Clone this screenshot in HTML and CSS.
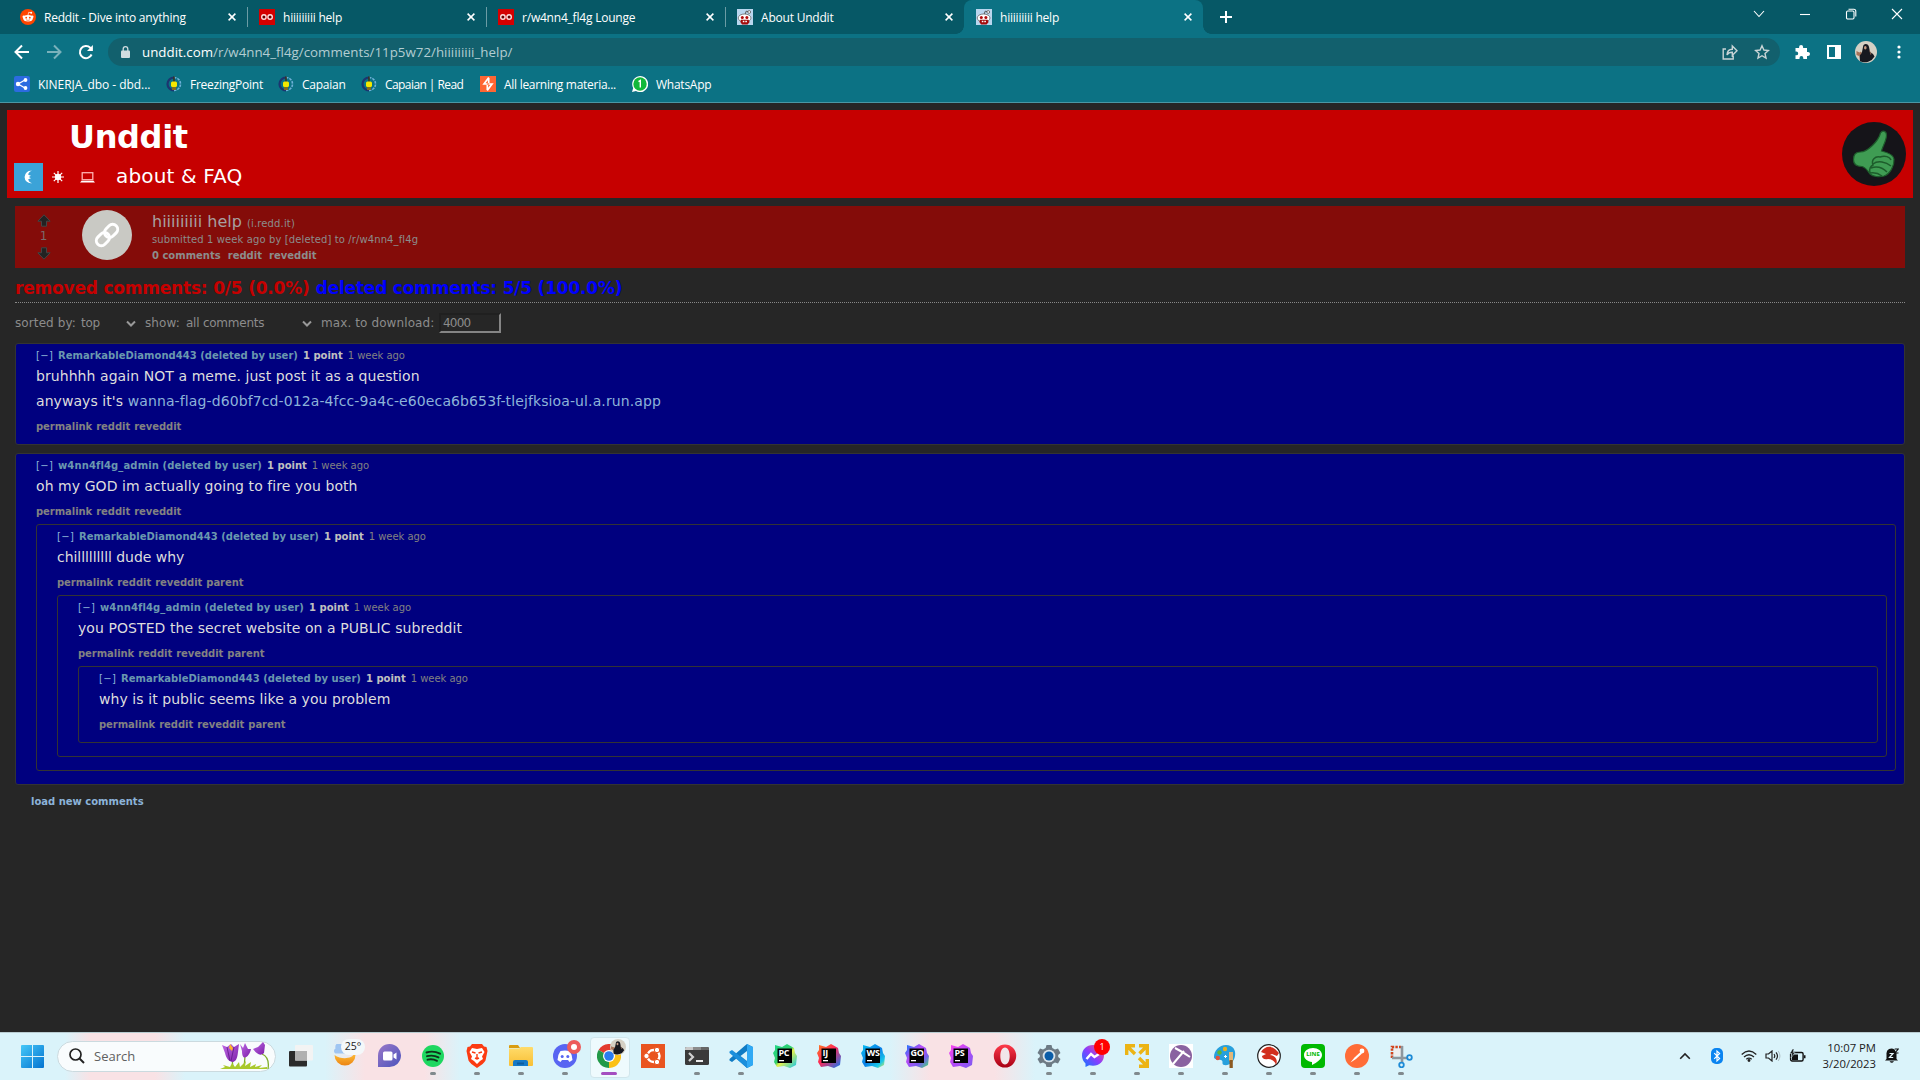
FILE: index.html
```html
<!DOCTYPE html>
<html lang="en">
<head>
<meta charset="utf-8">
<title>hiiiiiiiii help</title>
<link rel="stylesheet" href="styles.css">
</head>
<body>
<svg class="sprite" aria-hidden="true">
  <defs>
    <linearGradient id="jbGreen" x1="0" y1="0" x2="1" y2="1"><stop offset="0" stop-color="#21d789"/><stop offset=".45" stop-color="#2fd06f"/><stop offset=".55" stop-color="#e8f04c"/><stop offset="1" stop-color="#07c3f2"/></linearGradient>
    <linearGradient id="jbRed" x1="0" y1="0" x2="1" y2="1"><stop offset="0" stop-color="#fc801d"/><stop offset=".45" stop-color="#fe2857"/><stop offset="1" stop-color="#087cfa"/></linearGradient>
    <linearGradient id="jbCyan" x1="0" y1="0" x2="1" y2="1"><stop offset="0" stop-color="#07c3f2"/><stop offset=".5" stop-color="#0b7fe8"/><stop offset=".8" stop-color="#19c8e8"/><stop offset="1" stop-color="#f0ee4a"/></linearGradient>
    <linearGradient id="jbBlue" x1="0" y1="0" x2="1" y2="1"><stop offset="0" stop-color="#087cfa"/><stop offset=".4" stop-color="#b74af7"/><stop offset=".7" stop-color="#7a5cf0"/><stop offset="1" stop-color="#3bea62"/></linearGradient>
    <linearGradient id="jbPink" x1="0" y1="0" x2="1" y2="1"><stop offset="0" stop-color="#ff45ed"/><stop offset=".5" stop-color="#b74af7"/><stop offset="1" stop-color="#7a5cf0"/></linearGradient>
    <linearGradient id="msg" x1="0" y1="1" x2="1" y2="0"><stop offset="0" stop-color="#0a7cff"/><stop offset=".5" stop-color="#8a3cff"/><stop offset="1" stop-color="#ff6070"/></linearGradient>
    <linearGradient id="win" x1="0" y1="0" x2="1" y2="1"><stop offset="0" stop-color="#45c8f8"/><stop offset="1" stop-color="#0473d0"/></linearGradient>
    <linearGradient id="folder" x1="0" y1="0" x2="0" y2="1"><stop offset="0" stop-color="#ffdc6b"/><stop offset="1" stop-color="#f8bf35"/></linearGradient>
    <linearGradient id="opera" x1="0" y1="0" x2="0" y2="1"><stop offset="0" stop-color="#ff3a4a"/><stop offset="1" stop-color="#a70014"/></linearGradient>
    <linearGradient id="teams" x1="0" y1="0" x2="1" y2="1"><stop offset="0" stop-color="#9a78c8"/><stop offset="1" stop-color="#4b53bc"/></linearGradient>
    <linearGradient id="petal" x1="0" y1="0" x2="1" y2="1"><stop offset="0" stop-color="#c06be6"/><stop offset="1" stop-color="#7c1fa8"/></linearGradient>
    <linearGradient id="moon" x1="0" y1="0" x2="0" y2="1"><stop offset="0" stop-color="#ffc13a"/><stop offset="1" stop-color="#ec8413"/></linearGradient>
  </defs>
  <symbol id="i-close" viewBox="0 0 8 8"><path d="M.6.6l6.800 6.800M7.400.6L.6 7.400" stroke="#fff" stroke-width="1.500" fill="none"/></symbol>
  <symbol id="i-reddit-old" viewBox="0 0 16 16"><path d="M0 0h16v16H0z" fill="#d40000"/><circle cx="4.900" cy="8" r="2.200" fill="#600" stroke="#ffdcdc" stroke-width="1.400"/><circle cx="11.100" cy="8" r="2.200" fill="#600" stroke="#ffdcdc" stroke-width="1.400"/></symbol>
  <symbol id="i-unddit" viewBox="0 0 16 16"><path d="M0 0h16v16H0z" fill="#b9d6ee"/><path d="M8 5.500l1.200-3.300 3 .6" stroke="#555" fill="none"/><circle cx="12.200" cy="3" r="1.400" fill="#fff" stroke="#555" stroke-width=".8"/><ellipse cx="7.600" cy="9" rx="6.400" ry="4" fill="#fff" stroke="#666" stroke-width=".8"/><circle cx="5.300" cy="8.600" r="1.500" fill="#b00a0a"/><circle cx="9.900" cy="8.600" r="1.500" fill="#b00a0a"/><path d="M4 10.800h7.600l1 2.200-2 2.600H5L3.400 13z" fill="#a30a0a"/><path d="M5.800 11.800h1.600v1.400H5.800zM8.300 11.800h1.600v1.400H8.300z" fill="#fff"/></symbol>
  <symbol id="i-gear-bulb" viewBox="0 0 16 16"><path d="M8 1.500a6.500 6.500 0 0 0 0 13" fill="none" stroke="#1c3570" stroke-width="2.200"/><path d="M8 1.500a6.500 6.500 0 0 1 0 13" fill="none" stroke="#6fb1d8" stroke-width="1.600" stroke-dasharray="2.500 1"/><path d="M8 .5V6" stroke="#3a3420" stroke-width="1.600"/><rect x="5" y="5.500" width="6" height="5.500" rx="1.500" fill="#f4e800"/><path d="M6 11h4v3H6z" fill="#806c20"/></symbol>
  <symbol id="i-jb" viewBox="0 0 24 24"><path d="M2 1l7 2 5-3 7 4 1 5 2 3-1 9-6 3-6-2-7 1-3-5 1-4-2-5 2-3z"/></symbol>
  <symbol id="i-avatar" viewBox="0 0 22 22"><circle cx="11" cy="11" r="11" fill="#d5d0c4"/><path d="M8 6c0-4 5.500-4 6 0l1 5 3 2 1.500 2.500A11 11 0 0 1 5 20.200L4.500 14 7 11z" fill="#17181f"/><ellipse cx="10.300" cy="6.800" rx="1.300" ry="1.800" fill="#c49a82"/><path d="M1.500 10l3 1.500 1.500-1 .5 2L4 15l-2.500-1z" fill="#a87258"/><path d="M14 8l2.500 5-1 1z" fill="#8c6450"/></symbol>
</svg>

<div class="browser">
  <div class="tabstrip">
    <div class="tab"><svg class="fav" viewBox="0 0 16 16"><circle cx="8" cy="8" r="8" fill="#ff4500"/><ellipse cx="8" cy="9.300" rx="4.800" ry="3.300" fill="#fff"/><circle cx="3.700" cy="7.700" r="1.200" fill="#fff"/><circle cx="12.300" cy="7.700" r="1.200" fill="#fff"/><circle cx="11.200" cy="3.700" r="1" fill="#fff"/><path d="M8 6l.7-2.700 2.500.4" stroke="#fff" stroke-width=".7" fill="none"/><circle cx="6.200" cy="8.700" r=".9" fill="#ff4500"/><circle cx="9.800" cy="8.700" r=".9" fill="#ff4500"/><path d="M6 10.800q2 1.200 4 0" stroke="#ff4500" stroke-width=".6" fill="none"/></svg><span class="tab-title">Reddit - Dive into anything</span><svg class="close"><use href="#i-close"/></svg></div>
    <div class="tab"><svg class="fav"><use href="#i-reddit-old"/></svg><span class="tab-title">hiiiiiiiii help</span><svg class="close"><use href="#i-close"/></svg></div>
    <div class="tab"><svg class="fav"><use href="#i-reddit-old"/></svg><span class="tab-title">r/w4nn4_fl4g Lounge</span><svg class="close"><use href="#i-close"/></svg></div>
    <div class="tab last"><svg class="fav"><use href="#i-unddit"/></svg><span class="tab-title">About Unddit</span><svg class="close"><use href="#i-close"/></svg></div>
    <div class="tab active"><svg class="fav"><use href="#i-unddit"/></svg><span class="tab-title">hiiiiiiiii help</span><svg class="close"><use href="#i-close"/></svg></div>
    <svg class="plus" viewBox="0 0 12 12"><path d="M6 0v12M0 6h12" stroke="#fff" stroke-width="2"/></svg>
    <div class="window-controls">
      <svg viewBox="0 0 12 12"><path d="M1 3l5 5.500L11 3" /></svg>
      <svg viewBox="0 0 12 12"><path d="M1 6.500h10"/></svg>
      <svg viewBox="0 0 12 12"><rect x="1.500" y="3" width="7.500" height="8" rx="1.200"/><path d="M3.500 1.200h5.300a2 2 0 0 1 2 2v5.300"/></svg>
      <svg viewBox="0 0 12 12"><path d="M1 1l10 10M11 1L1 11"/></svg>
    </div>
  </div>

  <div class="toolbar">
    <svg class="nav" viewBox="0 0 16 16"><path d="M15 8H2M8 1.500L1.500 8 8 14.500"/></svg>
    <svg class="nav dim" viewBox="0 0 16 16"><path d="M1 8h13M8 1.500L14.500 8 8 14.500"/></svg>
    <svg class="nav" viewBox="0 0 16 16"><path d="M13.600 10.500A6.100 6.100 0 1 1 12.300 3.700L14 5.400"/><path d="M14.900 1v6H9z" fill="#fff" stroke="none"/></svg>
    <div class="omnibox">
      <svg class="lock" viewBox="0 0 9 12"><rect y="4.500" width="9" height="7.500" rx="1" fill="#d0dcdf"/><path d="M2.200 5V3a2.300 2.300 0 0 1 4.600 0v2" fill="none" stroke="#d0dcdf" stroke-width="1.300"/></svg>
      <span class="url"><b>unddit.com</b>/r/w4nn4_fl4g/comments/11p5w72/hiiiiiiiii_help/</span>
      <svg class="share" viewBox="0 0 16 16"><path d="M4 5H1.200v10h10v-3.500M5 11c.2-4 2.500-5.800 5.300-5.800V2L15 6.700l-4.700 4.600V8.200C8 8.200 6 9 5 11z"/></svg>
      <svg class="star" viewBox="0 0 16 16"><path d="M8 1.800l1.900 4.200 4.500.5-3.400 3 1 4.500L8 11.700 4 14l1-4.500-3.400-3 4.500-.5z"/></svg>
    </div>
    <div class="actions">
      <svg width="16" height="16" viewBox="0 0 16 16"><path d="M1.500 4h3.600V3a2 2 0 1 1 4 0v1H13v3.900h1a2 2 0 1 1 0 4h-1V15H9.300v-1a1.900 1.900 0 0 0-3.800 0v1h-4v-3.700h.8a1.900 1.900 0 0 0 0-3.800h-.8z" fill="#fff"/></svg>
      <svg width="14" height="14" viewBox="0 0 14 14"><path d="M0 0h14v14H0zM2 2v10h6V2z" fill="#fff" fill-rule="evenodd"/></svg>
      <svg width="22" height="22"><use href="#i-avatar"/></svg>
      <svg width="4" height="14" viewBox="0 0 4 14"><circle cx="2" cy="2" r="1.600" fill="#fff"/><circle cx="2" cy="7" r="1.600" fill="#fff"/><circle cx="2" cy="12" r="1.600" fill="#fff"/></svg>
    </div>
  </div>

  <div class="bookmarks">
    <div class="bm bm1"><svg class="fav" viewBox="0 0 16 16"><rect width="16" height="16" rx="2" fill="#2c6be0"/><path d="M4 8l7-4M4 8l7 4" stroke="#fff" stroke-width="1.400"/><circle cx="4" cy="8" r="2.200" fill="#fff"/><circle cx="11.500" cy="4" r="1.900" fill="#fff"/><circle cx="11.500" cy="12" r="1.900" fill="#fff"/></svg><span>KINERJA_dbo - dbd...</span></div>
    <div class="bm bm2"><svg class="fav"><use href="#i-gear-bulb"/></svg><span>FreezingPoint</span></div>
    <div class="bm bm3"><svg class="fav"><use href="#i-gear-bulb"/></svg><span>Capaian</span></div>
    <div class="bm bm4"><svg class="fav"><use href="#i-gear-bulb"/></svg><span>Capaian | Read</span></div>
    <div class="bm bm5"><svg class="fav" viewBox="0 0 16 16"><path d="M0 0h16v16H0z" fill="#ff6633"/><path d="M8.800 1.500L4 8h3.500M8.500 8H12L7.200 14.500M8.700 2v5M7.300 9v5" stroke="#fff" stroke-width="1.700" fill="none"/></svg><span>All learning materia...</span></div>
    <div class="bm bm6"><svg class="fav" viewBox="0 0 16 16"><path d="M0 16l1.200-4A8 8 0 1 1 4 14.900z" fill="#fff"/><circle cx="8" cy="8" r="6.700" fill="#12b83a"/><path d="M6.500 5.700L8.300 4.500V11.500" stroke="#fff" stroke-width="1.400" fill="none"/></svg><span>WhatsApp</span></div>
  </div>
</div>

<main class="page">
  <header class="banner">
    <div>
      <h1>Unddit</h1>
      <nav>
        <span class="theme on"><svg width="11" height="14" viewBox="0 0 11 14"><path d="M10 .8A6.300 6.300 0 1 0 10 13.200C7.800 12.600 6.500 11.200 6.200 9.300L9 8.300 6.800 7 9 5.800 6.200 4.700C6.500 2.800 7.800 1.400 10 .8z" fill="#fff"/></svg></span>
        <svg class="sun" viewBox="0 0 12 12"><circle cx="6" cy="6" r="3.200" fill="#fff"/><path d="M6 0v12M0 6h12M1.800 1.800l8.400 8.400M10.200 1.800l-8.400 8.400" stroke="#fff" stroke-width="1.200"/></svg>
        <svg class="laptop" viewBox="0 0 15 11"><rect x="2.200" y=".7" width="10.600" height="7" fill="#c60000" stroke="#ffb0b0" stroke-width="1.300"/><path d="M1.500 8.800h12l1.500 1.700H0z" fill="#fff"/></svg>
        <a class="faq">about &amp; FAQ</a>
      </nav>
    </div>
    <svg class="thumb" viewBox="0 0 64 64"><circle cx="32" cy="32" r="32" fill="#151419"/><path d="M38.500 11c2-3 6-2 6 2 0 6-4 11-5 16 4 1 12 3 12.500 8 .5 7-4 15-10 17-5 1.500-11 .5-14-2-2-3-5-7-8-7.500-6 0-8.500-2-8.500-7 0-5 2-7.500 7-7.500 7 0 18-11 20-19z" fill="#3f9c53" stroke="#1d5c2b" stroke-width="1.200"/><path d="M28 51c-1.500-4 1-7 3-8-2-5 2-9 7-8 5-2 10 0 11 3M31 42c5-4 13-2 18 2M29 46c6-2 12 0 16 4M28 51c5-1 8 0 12 3" fill="none" stroke="#1d5c2b" stroke-width="1.500"/></svg>
  </header>

  <section class="post">
    <div class="votes">
      <svg viewBox="0 0 14 13"><path d="M7 .8l6.200 6.400H9.500v5h-5v-5H.8z"/></svg>
      <span>1</span>
      <svg viewBox="0 0 14 13"><path d="M7 12.200L.8 5.800h3.700v-5h5v5h3.700z"/></svg>
    </div>
    <svg class="thumbnail" viewBox="0 0 50 50"><circle cx="25" cy="25" r="25" fill="#c9c9c4"/><g fill="none" stroke="#fff" stroke-width="3" transform="rotate(-45 25 25)"><rect x="12" y="20" width="14.500" height="10" rx="5"/><rect x="23.500" y="20" width="14.500" height="10" rx="5"/></g></svg>
    <div class="post-text">
      <div class="title">hiiiiiiiii help <small>(i.redd.it)</small></div>
      <div class="meta">submitted 1 week ago by [deleted] to /r/w4nn4_fl4g</div>
      <div class="post-links"><a>0 comments</a><a>reddit</a><a>reveddit</a></div>
    </div>
  </section>

  <div class="stats"><span class="removed">removed comments: 0/5 (0.0%)</span><span class="deleted">deleted comments: 5/5 (100.0%)</span></div>

  <div class="controls">
    <span class="c-sort">sorted by:</span>
    <span class="sel sel-sort">top<svg viewBox="0 0 10 7"><path d="M1 1.500l4 4 4-4"/></svg></span>
    <span class="c-show">show:</span>
    <span class="sel sel-show">all comments<svg viewBox="0 0 10 7"><path d="M1 1.500l4 4 4-4"/></svg></span>
    <span class="c-max">max. to download:</span>
    <span class="number">4000</span>
  </div>

  <article class="comment">
    <div class="head"><span class="fold">[−]</span><b class="user short">RemarkableDiamond443 (deleted by user)</b><b class="points">1 point</b><span class="ago">1 week ago</span></div>
    <p>bruhhhh again NOT a meme. just post it as a question</p>
    <p>anyways it's <a>wanna-flag-d60bf7cd-012a-4fcc-9a4c-e60eca6b653f-tlejfksioa-ul.a.run.app</a></p>
    <div class="links"><a>permalink</a><a>reddit</a><a>reveddit</a></div>
  </article>

  <article class="comment">
    <div class="head"><span class="fold">[−]</span><b class="user">w4nn4fl4g_admin (deleted by user)</b><b class="points">1 point</b><span class="ago">1 week ago</span></div>
    <p>oh my GOD im actually going to fire you both</p>
    <div class="links"><a>permalink</a><a>reddit</a><a>reveddit</a></div>
    <article class="comment">
      <div class="head"><span class="fold">[−]</span><b class="user short">RemarkableDiamond443 (deleted by user)</b><b class="points">1 point</b><span class="ago">1 week ago</span></div>
      <p class="snug">chilllllllll dude why</p>
      <div class="links"><a>permalink</a><a>reddit</a><a>reveddit</a><a>parent</a></div>
      <article class="comment">
        <div class="head"><span class="fold">[−]</span><b class="user">w4nn4fl4g_admin (deleted by user)</b><b class="points">1 point</b><span class="ago">1 week ago</span></div>
        <p>you POSTED the secret website on a PUBLIC subreddit</p>
        <div class="links"><a>permalink</a><a>reddit</a><a>reveddit</a><a>parent</a></div>
        <article class="comment">
          <div class="head"><span class="fold">[−]</span><b class="user short">RemarkableDiamond443 (deleted by user)</b><b class="points">1 point</b><span class="ago">1 week ago</span></div>
          <p>why is it public seems like a you problem</p>
          <div class="links"><a>permalink</a><a>reddit</a><a>reveddit</a><a>parent</a></div>
        </article>
      </article>
    </article>
  </article>

  <div class="load-new">load new comments</div>
</main>

<footer class="taskbar">
  <div class="cell"><svg width="23" height="23" viewBox="0 0 23 23"><path d="M0 1q0-1 1-1h10v11H0zM12 0h10q1 0 1 1v10H12zM0 12h11v11H1q-1 0-1-1zM12 12h11v10q0 1-1 1H12z" fill="url(#win)"/></svg></div>
  <div class="search">
    <svg width="16" height="16" viewBox="0 0 16 16"><circle cx="6.500" cy="6.500" r="5.500" fill="none" stroke="#222" stroke-width="1.700"/><path d="M10.500 10.500l4.500 4.500" stroke="#222" stroke-width="2"/></svg>
    <span>Search</span>
    <svg class="flowers" viewBox="0 0 50 28"><path d="M12 15l1 12M25 14l-1 13M42 12c7 3 7 9 6 15" stroke="#7fae2c" stroke-width="1.300" fill="none"/><path d="M2 3l5 2 4-3 3 3 5-3-1 8c-1 9-3 9-5 10-4 0-7-4-8-9z" fill="url(#petal)"/><path d="M7 5l3 14M14 5l-3 14" stroke="#5e1687" stroke-width=".8"/><path d="M20 2l3 4 2-5 3 6 3 0c-1 7-9 14-9 2z" fill="url(#petal)"/><path d="M33 7l5-2 5-5 2 3-1 8c-4 4-8 0-11-4z" fill="url(#petal)"/><path d="M9 6l1-4 3 4-1 3z" fill="#ffb428"/><path d="M0 27l5-2-2-2 7 2 2-4 3 4 4-5 1 5 6-6-1 5 6-4-1 5 6-3-1 3 7-2-3 3 8-1v2z" fill="#a9c92c"/></svg>
  </div>
  <div class="cell"><svg width="24" height="24" viewBox="0 0 24 24"><rect x="0" y="7" width="18" height="15.500" rx="1" fill="#2b2b2b"/><rect x="6" y="1" width="18" height="15.500" rx="1" fill="#f3f3f3"/><path d="M6 7h12v9.500H6z" fill="#b0b0b0"/></svg></div>
  <div class="cell weather"><svg width="24" height="24" viewBox="0 0 24 24"><path d="M1.500 11a10.500 10.500 0 0 0 21 0l-1-2c-2 6-13 7-20 2z" fill="url(#moon)"/><path d="M2.500 9.500a2.800 2.800 0 0 1 0-5 5 5 0 0 1 9.500-3v8z" fill="#9fc5f2"/></svg><span class="temp">25°</span></div>
  <div class="cell"><svg width="24" height="24" viewBox="0 0 24 24"><path d="M1 23V11.500A11.500 11.500 0 1 1 12 23z" fill="url(#teams)"/><rect x="6" y="7.500" width="9.500" height="9" rx="1.500" fill="#fff"/><path d="M16.500 10.500l3-2v7l-3-2z" fill="#fff"/></svg></div>
  <div class="cell run"><svg width="24" height="24" viewBox="0 0 24 24"><circle cx="12" cy="12" r="11" fill="#1ed760"/><path d="M5.500 8.500q7-2.200 13.500 1.200M6 12.200q6-1.600 11.500 1.200M6.500 15.700q5-1.200 9.500 1.100" stroke="#10301a" stroke-width="1.900" stroke-linecap="round" fill="none"/></svg></div>
  <div class="cell run"><svg width="24" height="24" viewBox="0 0 24 24"><path d="M7 0h10l2 2.500 2.500.5 1 4-2 9.500Q19 19.500 12 24 5 19.500 3.500 16.500L1.500 7l1-4L5 2.500z" fill="#fb3b12"/><path d="M12 5l5-1 2.500 4-2.500 4.500 1 2.500-3 2-3 3-3-3-3-2 1-2.500L4.500 8 7 4z" fill="#fff"/><path d="M7 8l3.500 1M17 8l-3.500 1M10 14l2 1 2-1M12 10v4" stroke="#fb3b12" stroke-width="1.400" fill="none"/></svg></div>
  <div class="cell run"><svg width="24" height="24" viewBox="0 0 24 24"><path d="M0 2q0-1 1-1h8l2 3H0z" fill="#d99c10"/><path d="M0 4.500h10l2-1.500h11q1 0 1 1v17q0 1-1 1H1q-1 0-1-1z" fill="url(#folder)"/><path d="M4 22v-4q0-2 2-2h11q2 0 2 2v4z" fill="#1579c6"/><path d="M8 18.500h7v2H8z" fill="#0c5c9f"/></svg></div>
  <div class="cell run"><svg width="24" height="24" viewBox="0 0 24 24"><circle cx="12" cy="12" r="12" fill="#5865f2"/><path d="M7.500 7Q12 6 16.500 7q3 4 3 9l-3 2-1.500-2h-6l-1.500 2-3-2q0-5 3-9z" fill="#fff"/><circle cx="9.200" cy="12.500" r="1.500" fill="#5865f2"/><circle cx="14.800" cy="12.500" r="1.500" fill="#5865f2"/></svg><svg class="badge b-discord" viewBox="0 0 14 14"><circle cx="7" cy="7" r="7" fill="#ed5b5b"/><circle cx="7" cy="7" r="3" fill="#fff"/></svg></div>
  <div class="cell run current"><svg width="24" height="24" viewBox="0 0 24 24"><path d="M12 12L1.600 6A12 12 0 0 1 22.400 6z" fill="#e33b2e"/><path d="M12 12l10.400-6A12 12 0 0 1 12 24z" fill="#fbc116"/><path d="M12 12v12A12 12 0 0 1 1.600 6z" fill="#229a48"/><path d="M12 6h10.400q3 8-3 14L12 24l5.200-9z" fill="#fbc116"/><circle cx="12" cy="12" r="6" fill="#fff"/><circle cx="12" cy="12" r="4.800" fill="#2a7cf0"/></svg><svg class="badge b-chrome"><use href="#i-avatar"/></svg></div>
  <div class="cell"><svg width="24" height="24" viewBox="0 0 24 24"><path d="M0 0h24v24H0z" fill="#e95420"/><circle cx="12.500" cy="12" r="6" fill="none" stroke="#fff" stroke-width="2.400"/><g fill="#fff" stroke="#e95420" stroke-width="1"><circle cx="5.500" cy="12" r="2.700"/><circle cx="16" cy="6" r="2.700"/><circle cx="16" cy="18" r="2.700"/></g></svg></div>
  <div class="cell run"><svg width="24" height="24" viewBox="0 0 24 24"><rect y="3" width="24" height="18" rx="1.500" fill="#3a3a3a"/><path d="M0 6V4.500Q0 3 1.500 3H8v3z" fill="#c8c8c8"/><path d="M8 3h8v3H8z" fill="#8b8b8b"/><path d="M16 3h6.500Q24 3 24 4.500V6h-8z" fill="#666"/><path d="M4 9l4 4-4 4" stroke="#d0d0d0" stroke-width="2.200" fill="none"/><path d="M11 17h7" stroke="#fff" stroke-width="1.800"/></svg></div>
  <div class="cell run"><svg width="24" height="24" viewBox="0 0 24 24"><path d="M18 0l6 3v18l-6 3L7.500 14.500 3 18l-2.500-1.500V15l15-13z" fill="#0f7bc4"/><path d="M.5 7.500L3 6l15 11.500V24L.5 9z" fill="#1b8fdc"/><path d="M18 0l6 3v18l-6 3z" fill="#30a9f4"/><path d="M18 7v10l-6.500-5z" fill="#daf3fa"/></svg></div>
  <div class="cell jb"><svg width="24" height="24" viewBox="0 0 24 24"><use href="#i-jb" fill="url(#jbGreen)"/><path d="M4.500 4.500h14.500v14.500H4.500z"/><path d="M6 16h5v1.300H6z" fill="#fff"/></svg><b>PC</b></div>
  <div class="cell jb"><svg width="24" height="24" viewBox="0 0 24 24"><use href="#i-jb" fill="url(#jbRed)"/><path d="M4.500 4.500h14.500v14.500H4.500z"/><path d="M6 16h5v1.300H6z" fill="#fff"/></svg><b>IJ</b></div>
  <div class="cell jb"><svg width="24" height="24" viewBox="0 0 24 24"><use href="#i-jb" fill="url(#jbCyan)"/><path d="M4.500 4.500h14.500v14.500H4.500z"/><path d="M6 16h5v1.300H6z" fill="#fff"/></svg><b>WS</b></div>
  <div class="cell jb"><svg width="24" height="24" viewBox="0 0 24 24"><use href="#i-jb" fill="url(#jbBlue)"/><path d="M4.500 4.500h14.500v14.500H4.500z"/><path d="M6 16h5v1.300H6z" fill="#fff"/></svg><b>GO</b></div>
  <div class="cell jb"><svg width="24" height="24" viewBox="0 0 24 24"><use href="#i-jb" fill="url(#jbPink)"/><path d="M4.500 4.500h14.500v14.500H4.500z"/><path d="M6 16h5v1.300H6z" fill="#fff"/></svg><b>PS</b></div>
  <div class="cell"><svg width="24" height="24" viewBox="0 0 24 24"><path d="M12 .5a11.200 11.500 0 1 0 0 23 11.200 11.500 0 0 0 0-23zM12 3.500c3 0 4.700 4 4.700 8.500s-1.700 8.500-4.700 8.500S7.300 16.500 7.300 12 9 3.500 12 3.500z" fill="url(#opera)" fill-rule="evenodd"/></svg></div>
  <div class="cell run"><svg width="24" height="24" viewBox="0 0 24 24"><path d="M9.500 1h5l.8 3 2.700 1.500 3-1L23.500 9l-2.300 2v2l2.300 2-2.500 4.500-3-1-2.700 1.500-.8 3h-5l-.8-3L6 18.500l-3 1L.5 15l2.300-2v-2L.5 9 3 4.500l3 1L8.700 4z" fill="#6d7a84"/><circle cx="12" cy="12" r="6.300" fill="#d8e4ec"/><circle cx="12" cy="12" r="4.500" fill="#0b5da8"/></svg></div>
  <div class="cell run"><svg width="24" height="24" viewBox="0 0 24 24"><path d="M12 1C5.500 1 1 5.500 1 11.500c0 3.300 1.300 6 3.500 7.900V23l3.700-1.700c1.200.3 2.500.5 3.800.5 6.500 0 11-4.500 11-10.300S18.500 1 12 1z" fill="url(#msg)"/><path d="M5.500 15l4.500-5 3.500 3 4.500-3" stroke="#fff" stroke-width="2.400" fill="none"/></svg><span class="badge b-count">1</span></div>
  <div class="cell run"><svg width="24" height="24" viewBox="0 0 24 24"><path d="M1.700 11V1.700H10M14 1.700h8.300V11M22.300 15v7.300H14M2 2l8 8M22 2l-7.500 7.500M14 14l8 8" stroke="#ecb414" stroke-width="3.400" fill="none"/></svg></div>
  <div class="cell run"><svg width="24" height="24" viewBox="0 0 24 24"><path d="M0 0h24v24H0z" fill="#fff"/><circle cx="12" cy="12" r="11" fill="#8a62a0"/><path d="M6 4q6 3 15 9M15 7L4 20" stroke="#fff" stroke-width="2" fill="none"/></svg></div>
  <div class="cell run"><svg width="24" height="24" viewBox="0 0 24 24"><path d="M13 1c7 0 10 5 9 11s-6 10-11 9c-3-1 0-4-3-5s-7 0-7-3C1 7 6 1 13 1z" fill="#27a0dc"/><circle cx="12" cy="5" r="2.200" fill="#e8b020"/><circle cx="6.500" cy="8.500" r="2.200" fill="#5cb531"/><circle cx="4.800" cy="14" r="2.200" fill="#e2513a"/><path d="M11 12.500h3M12.500 11v3" stroke="#fff"/><path d="M16 8h4v9h-4z" fill="#e3b778"/><path d="M16.500 16h3.300v8h-3.300z" fill="#8c5a22"/></svg></div>
  <div class="cell run"><svg width="24" height="24" viewBox="0 0 24 24"><circle cx="12" cy="12" r="11.300" fill="#fff" stroke="#222" stroke-width="1.200"/><path d="M4 8C7 3 13 1 18 5l4 4-2 3-5-2-2 1c6 1 8 5 6 10-1-4-4-6-8-6-4 1-6-1-6-3l4-2z" fill="#d22f1e"/></svg></div>
  <div class="cell run"><svg width="24" height="24" viewBox="0 0 24 24"><rect width="24" height="24" rx="4" fill="#00b900"/><path d="M12 4c-5 0-9 3-9 7s3.500 6.300 8 7v3c5-2.500 10-6 10-10s-4-7-9-7z" fill="#fff"/></svg><b class="line-label">LINE</b></div>
  <div class="cell run"><svg width="24" height="24" viewBox="0 0 24 24"><circle cx="12" cy="12" r="12" fill="#ff6c37"/><path d="M5.500 18.500l4-5 6-5.500 1.500 1.500-6 5.500z" fill="#fff"/><circle cx="17" cy="7" r="2.400" fill="#fff"/></svg></div>
  <div class="cell run"><svg width="24" height="24" viewBox="0 0 24 24"><path d="M3 14V3h11" stroke="#d4441c" stroke-width="2.600" stroke-dasharray="2.400 1.200" fill="none"/><path d="M5 5h7v7H5z" fill="#eee"/><path d="M13 2v16M3 14h15" stroke="#8e979d" stroke-width="2.600" fill="none"/><circle cx="20.500" cy="13.500" r="2.300" fill="none" stroke="#1c8ad6" stroke-width="1.800"/><circle cx="12.500" cy="21" r="2.300" fill="none" stroke="#1c8ad6" stroke-width="1.800"/></svg></div>
  <div class="tray">
    <svg class="up" viewBox="0 0 12 8"><path d="M1.200 6.800L6 2l4.800 4.800" fill="none" stroke="#222" stroke-width="1.600"/></svg>
    <svg class="bt" viewBox="0 0 12 16"><rect width="12" height="16" rx="5" fill="#0a84f0"/><path d="M3.200 5.200l5.400 5.400L6 13V3l2.600 2.400-5.400 5.400" fill="none" stroke="#fff" stroke-width="1.200"/></svg>
    <svg class="wifi" viewBox="0 0 16 12"><path d="M.7 4.500q7.300-7 14.600 0M3 7q5-4.600 10 0M5.300 9.300q2.700-2.300 5.400 0" fill="none" stroke="#222" stroke-width="1.300"/><circle cx="8" cy="10.500" r="1.400" fill="#222"/></svg>
    <svg class="vol" viewBox="0 0 16 12"><path d="M1 4h2.500L7 1v10L3.500 8H1zM9 4q1.500 2 0 4M11 2.300q3 3.700 0 7.400" fill="none" stroke="#222" stroke-width="1.200"/><path d="M13.200 1q3.500 5 0 10" fill="none" stroke="#aebfc5"/></svg>
    <svg class="bat" viewBox="0 0 17 13"><rect x="1.600" y="3.500" width="12.500" height="8.500" rx="1.500" fill="none" stroke="#111" stroke-width="1.400"/><path d="M3 5.500h6V11H3z" fill="#111"/><path d="M15 6.200h1.500v3H15z" fill="#111"/><path d="M3.500 0L1 4.500h2L2 9l4-5.300H4L5 0z" fill="#111" stroke="#daf3fa" stroke-width=".5"/></svg>
    <div class="clock"><span>10:07 PM</span><span class="date">3/20/2023</span></div>
    <svg class="bell" viewBox="0 0 14 15"><path d="M1.500 11V6a5 5 0 0 1 8-4.500L11.500 5v6l1.500 1.500H0zM4.500 13.300h4.500q-2.200 3-4.500 0z" fill="#111"/><path d="M9.700 1h3.500L10 5h3.500" fill="none" stroke="#111" stroke-width="1.100"/><path d="M4.500 5.500h3.500l-3.500 4h3.700" fill="none" stroke="#e5f6fb" stroke-width="1.200"/></svg>
  </div>
</footer>
</body>
</html>
```
FILE: styles.css
```css
* { box-sizing: border-box; }
html, body { height: 100%; }
body {
  margin: 0;
  background: #262626;
  display: flex;
  flex-direction: column;
  overflow: hidden;
  font-family: "DejaVu Sans", Verdana, sans-serif;
  color: #ddd;
}
svg { display: block; flex: none; }
.sprite { position: absolute; width: 0; height: 0; }
h1, p { margin: 0; }

/* Browser chrome */
.browser {
  height: 103px;
  flex: none;
  background: #0c7284;
  border-bottom: 1px solid #4b98a5;
  font: 12px "Open Sans", "Segoe UI", sans-serif;
  color: #fff;
}
.tabstrip {
  height: 34px;
  background: #065866;
  display: flex;
  align-items: center;
  padding-left: 8px;
}
.tab {
  width: 239px;
  height: 34px;
  padding: 0 11px 0 12px;
  display: flex;
  align-items: center;
  gap: 8px;
  position: relative;
}
.tab:not(.active):not(.last)::after {
  content: "";
  position: absolute;
  right: -1px;
  top: 7px;
  width: 1px;
  height: 20px;
  background: #6b9ca5;
}
.tab.active { background: #0c7284; border-radius: 8px 8px 0 0; }
.tab.active::before,
.tab.active::after {
  content: "";
  position: absolute;
  bottom: 0;
  width: 8px;
  height: 8px;
}
.tab.active::before { left: -8px; background: radial-gradient(circle at 0 0, transparent 7.5px, #0c7284 8px); }
.tab.active::after { right: -8px; background: radial-gradient(circle at 100% 0, transparent 7.5px, #0c7284 8px); }
.fav { width: 16px; height: 16px; }
.tab-title { flex: 1; letter-spacing: -.21px; white-space: nowrap; }
.close { width: 8px; height: 8px; }
.plus { width: 12px; height: 12px; margin-left: 17px; }
.window-controls { margin: -6px 17px 0 auto; display: flex; gap: 34px; }
.window-controls svg { width: 12px; height: 12px; fill: none; stroke: #fff; stroke-width: 1.1; }

.toolbar { height: 36px; display: flex; align-items: center; padding-left: 14px; }
.nav { width: 16px; height: 16px; margin-right: 16px; fill: none; stroke: #fff; stroke-width: 2; }
.nav.dim { opacity: .45; }
.omnibox {
  width: 1672px;
  height: 28px;
  margin-left: -2px;
  border-radius: 14px;
  background: #12606d;
  display: flex;
  align-items: center;
  padding: 0 10px 0 13px;
}
.lock { width: 9px; height: 12px; margin-right: 12px; }
.url { flex: 1; font-size: 13.3px; color: #b3cdd2; letter-spacing: .02px; }
.url b { font-weight: 400; color: #fff; }
.omnibox svg:not(.lock) { fill: none; stroke: #c9d4d6; stroke-width: 1.4; width: 16px; height: 16px; }
.star { margin-left: 16px; }
.actions { display: flex; align-items: center; padding-left: 14px; }
.actions svg:nth-child(2) { margin-left: 17px; }
.actions svg:nth-child(3) { margin-left: 14px; }
.actions svg:nth-child(4) { margin-left: 20px; }

.bookmarks { height: 28px; display: flex; align-items: center; padding-left: 14px; }
.bm { display: flex; align-items: center; gap: 8px; white-space: nowrap; letter-spacing: -.25px; }
.bm1 { width: 152px; letter-spacing: -.05px; }
.bm2 { width: 112px; }
.bm3 { width: 83px; }
.bm4 { width: 119px; letter-spacing: -.57px; }
.bm5 { width: 152px; letter-spacing: -.28px; }

/* Page */
.page { flex: 1; padding: 7px 7px 0; min-height: 0; }
.banner {
  height: 88px;
  background: #c60000;
  display: flex;
  justify-content: space-between;
  padding: 0 7px;
  color: #fff;
}
.banner h1 { font-size: 32px; line-height: 40px; height: 53px; padding: 7px 0 0 55px; letter-spacing: -.35px; }
.banner nav { display: flex; align-items: center; height: 28px; }
.theme { width: 29px; height: 28px; background: #3ba3d8; display: flex; align-items: center; padding-left: 8px; }
.sun { width: 12px; height: 12px; margin-left: 9px; }
.laptop { width: 15px; height: 11px; margin-left: 16px; }
.faq { margin-left: 21px; font-size: 20px; line-height: 26px; letter-spacing: .15px; padding-bottom: 2px; }
.thumb { width: 64px; height: 64px; margin-top: 12px; }

.post {
  height: 62px;
  margin: 8px 8px 0;
  background: #840c09;
  display: flex;
  color: #8c8c8c;
}
.votes { width: 57px; padding-top: 8px; display: flex; flex-direction: column; align-items: center; font-size: 12px; line-height: 14px; }
.votes svg { width: 14px; height: 13px; fill: #222; stroke: #454545; }
.votes span { height: 20px; padding-top: 2px; color: #7b6b6b; }
.thumbnail { width: 50px; height: 50px; margin: 4px 20px 0 10px; }
.post-text { font-size: 10px; letter-spacing: .11px; }
.title { font-size: 16px; line-height: 20px; height: 26px; padding-top: 6px; letter-spacing: 0; color: #a8a0a0; }
.title small { font-size: 10px; color: #8c8c8c; letter-spacing: .15px; }
.meta { line-height: 16px; height: 15px; }
.post-links { line-height: 17px; display: flex; gap: 7px; font-weight: 700; letter-spacing: 0; }

.stats {
  height: 35px;
  margin: 0 8px;
  padding-top: 10px;
  border-bottom: 1px dotted #888;
  font-size: 17px;
  line-height: 20px;
  font-weight: 700;
  letter-spacing: -.2px;
  display: flex;
  gap: 6px;
}
.removed { color: #c60000; }
.deleted { color: #00f; }

.controls { height: 40px; margin-left: 8px; display: flex; align-items: center; color: #8c8c8c; font-size: 12px; letter-spacing: .1px; white-space: nowrap; }
.c-sort { width: 66px; }
.c-show { width: 41px; }
.c-max { width: 118px; }
.sel { display: flex; align-items: center; justify-content: space-between; letter-spacing: -.24px; }
.sel svg { width: 10px; height: 7px; fill: none; stroke: #999; stroke-width: 2; }
.sel-sort { width: 55px; margin-right: 9px; }
.sel-show { width: 126px; margin-right: 9px; }
.number { width: 62px; height: 20px; border: 2px solid; border-color: #202020 #858585 #858585 #202020; padding: 0 0 0 2px; line-height: 16px; letter-spacing: -.8px; }

.comment {
  border: 1px solid #333;
  border-radius: 3px;
  background: #00007f;
  margin: 0 8px 8px;
  padding: 5px 8px 5px 20px;
}
.comment .comment { margin: 0 0 8px; }
.head { height: 15px; line-height: 14px; font-size: 10px; display: flex; white-space: pre; color: #828282; }
.fold { width: 22px; color: #8cb3d9; letter-spacing: .4px; }
.user { color: #6a98af; letter-spacing: .12px; margin-right: 5px; }
.user.short { letter-spacing: .02px; }
.points { color: #c0c0c0; letter-spacing: 0; margin-right: 5px; }
.ago { letter-spacing: -.04px; }
.comment p { font-size: 14px; line-height: 25px; letter-spacing: .07px; }
.comment p.snug { letter-spacing: -.05px; }
.comment p a { color: #8cb3d9; letter-spacing: .11px; }
.links { height: 25px; line-height: 25px; font-size: 10px; font-weight: 700; color: #828282; display: flex; gap: 4px; letter-spacing: -.05px; }
.page > .comment + .comment { margin-bottom: 0; }
.load-new { padding: 9px 0 0 24px; font-size: 10px; line-height: 16px; font-weight: 700; color: #8cb3d9; }

/* Taskbar */
.taskbar {
  height: 48px;
  flex: none;
  border-top: 1px solid #b9ccd1;
  background: linear-gradient(90deg, #daf3fa 65px, #f9e2e5 90px, #f9e2e5 155px, #daf3fa 185px, #daf3fa 325px, #f9e2e5 365px, #f9e2e5 425px, #daf3fa 460px, #daf3fa 890px, #f9e2e5 930px, #f9e2e5 995px, #daf3fa 1035px);
  display: flex;
  align-items: center;
  padding-left: 10px;
  color: #1a1a1a;
  font-family: "Open Sans", "Segoe UI", sans-serif;
}
.cell { width: 44px; height: 47px; padding-bottom: 1px; flex: none; display: flex; align-items: center; justify-content: center; position: relative; }
.cell > * { z-index: 1; }
.run::after { content: ""; position: absolute; left: 19px; bottom: 5px; width: 6px; height: 3px; border-radius: 2px; background: #80898d; }
.current::before { content: ""; position: absolute; left: 3px; top: 4px; width: 38px; height: 39px; border-radius: 4px; background: #eefafd; border: 1px solid #d0e6ec; }
.current::after { left: 14px; width: 16px; background: #a44ec0; }
.search {
  width: 219px;
  height: 31px;
  margin: 0 3px 1px;
  padding: 0 5px 0 11px;
  border: 1px solid #cbdadf;
  border-radius: 16px;
  background: #f9fcfd;
  display: flex;
  align-items: center;
  font-size: 13px;
  color: #606060;
}
.search span { margin-left: 9px; flex: 1; }
.flowers { width: 50px; height: 28px; }
.temp { position: absolute; right: 2px; top: 6px; width: 24px; height: 16px; border-radius: 8px; background: #f4f8fa; font-size: 10.500px; line-height: 15px; text-align: center; }
.badge { position: absolute; }
.b-discord { width: 14px; height: 14px; left: 24px; top: 7px; }
.b-chrome { width: 16px; height: 16px; left: 23px; top: 6px; }
.b-count { width: 16px; height: 16px; left: 23px; top: 6px; border-radius: 8px; background: #f00; color: #fff; font-size: 9px; line-height: 15px; text-align: center; }
.jb b { position: absolute; left: 15.500px; top: 15px; font-size: 9px; line-height: 10px; letter-spacing: -.3px; color: #fff; }
.line-label { position: absolute; width: 44px; top: 17px; text-align: center; font-size: 6px; line-height: 9px; color: #00b900; }
.tray { margin-left: auto; display: flex; align-items: center; padding: 0 21px 2px 0; }
.up { width: 12px; height: 8px; }
.bt { width: 12px; height: 16px; margin-left: 20px; }
.wifi { width: 16px; height: 12px; margin-left: 18px; }
.vol { width: 16px; height: 12px; margin-left: 8px; }
.bat { width: 17px; height: 13px; margin-left: 8px; }
.clock { width: 70px; display: flex; flex-direction: column; align-items: flex-end; font-size: 11.300px; line-height: 16px; }
.bell { width: 14px; height: 15px; margin-left: 9px; }
```
